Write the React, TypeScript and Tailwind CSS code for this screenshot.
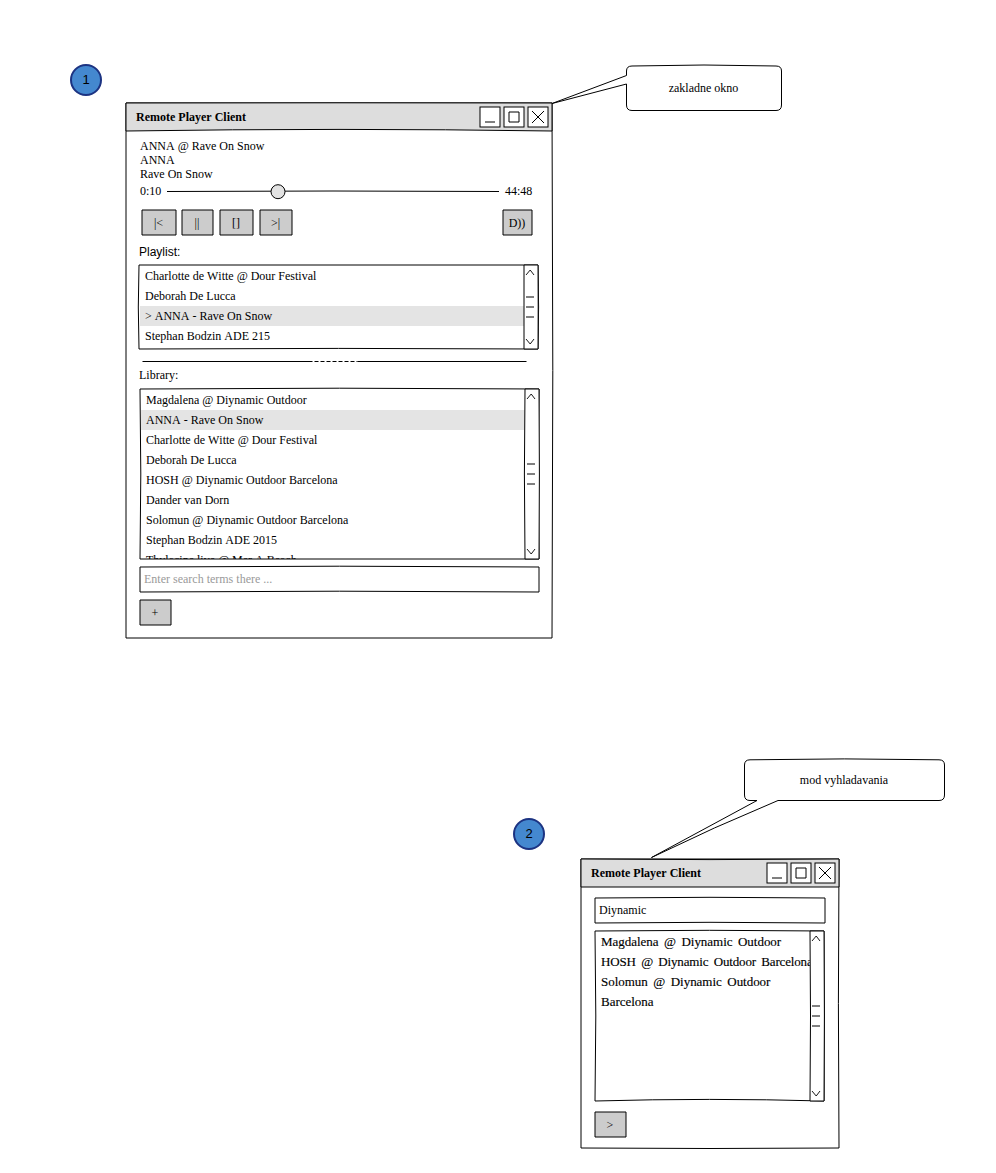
import type { ReactNode } from "react";

type Bow = { t?: number; r?: number; b?: number; l?: number };

/** Hand-drawn outline: four gently bowed strokes around a box. */
function Outline({ w, h, bow = {}, fill = "none" }: { w: number; h: number; bow?: Bow; fill?: string }) {
  const { t = 0, r = 0, b = 0, l = 0 } = bow;
  const d = `M0 0Q${w / 2} ${t * 2} ${w} 0Q${w + r * 2} ${h / 2} ${w} ${h}Q${w / 2} ${h + b * 2} 0 ${h}Q${l * 2} ${h / 2} 0 0Z`;
  return (
    <svg width={w} height={h} className="pointer-events-none absolute left-0 top-0 overflow-visible" aria-hidden="true">
      <path d={d} fill={fill} stroke="#000" strokeWidth="1" strokeLinejoin="round" />
    </svg>
  );
}

function SketchButton({ w, children }: { w: number; children: ReactNode }) {
  return (
    <button className="relative h-[25px] shrink-0 leading-[27px]" style={{ width: w }}>
      <Outline w={w} h={25} fill="#ccc" />
      <span className="relative block h-[25px] pr-px">{children}</span>
    </button>
  );
}

function WindowButton({ children }: { children: ReactNode }) {
  return (
    <button className="size-5">
      <svg width="20" height="20" className="block overflow-visible" fill="none" stroke="#000">
        <rect width="20" height="20" fill="#fff" />
        {children}
      </svg>
    </button>
  );
}

function TitleBar({ w, bow }: { w: number; bow?: Bow }) {
  return (
    <header className="relative flex h-7 items-center justify-between pl-2.5 pr-1">
      <Outline w={w} h={28} bow={bow} fill="#ddd" />
      <h1 className="relative font-bold">Remote Player Client</h1>
      <div className="relative flex gap-1">
        <WindowButton>
          <path d="M5 15h10" />
        </WindowButton>
        <WindowButton>
          <path d="M5 5h10v10h-10z" />
        </WindowButton>
        <WindowButton>
          <path d="M4 4l12 12M16 4l-12 12" />
        </WindowButton>
      </div>
    </header>
  );
}

function Scrollbar({ h, bow }: { h: number; bow?: Bow }) {
  const m = h / 2;
  return (
    <div className="relative w-3.5 shrink-0">
      <Outline w={14} h={h} bow={bow} fill="#fff" />
      <svg width="14" height={h} className="relative block overflow-visible" fill="none" stroke="#000">
        <path d={`M2 10L6.2 5L10 10M2 ${h - 10}L6.2 ${h - 5}L10 ${h - 10}`} strokeWidth="0.9" />
        <path d={`M2 ${m - 10}h8M2 ${m}h8M2 ${m + 10}h8`} />
      </svg>
    </div>
  );
}

function ListBox({
  w,
  h,
  items,
  selected,
  bow,
  barBow,
  text = "",
}: {
  w: number;
  h: number;
  items: string[];
  selected?: number;
  bow?: Bow;
  barBow?: Bow;
  text?: string;
}) {
  return (
    <div className="relative flex" style={{ width: w, height: h }}>
      <Outline w={w} h={h} bow={bow} />
      <ul className={`min-w-0 flex-1 overflow-hidden pl-px pt-px ${text}`}>
        {items.map((item, i) => (
          <li key={i} className={`h-5 whitespace-nowrap pl-[5px] leading-5 ${i === selected ? "bg-[#e4e4e4]" : ""}`}>
            {item}
          </li>
        ))}
      </ul>
      <Scrollbar h={h} bow={barBow} />
    </div>
  );
}

function Badge({ children, className }: { children: ReactNode; className: string }) {
  return (
    <div
      className={`absolute flex size-8 items-center justify-center rounded-full border-2 border-[#1c3382] bg-[#4488cf] font-['Liberation_Sans',sans-serif] text-[13px] ${className}`}
    >
      {children}
    </div>
  );
}

const playlist = ["Charlotte de Witte @ Dour Festival", "Deborah De Lucca", "> ANNA - Rave On Snow", "Stephan Bodzin ADE 215"];

const library = [
  "Magdalena @ Diynamic Outdoor",
  "ANNA - Rave On Snow",
  "Charlotte de Witte @ Dour Festival",
  "Deborah De Lucca",
  "HOSH @ Diynamic Outdoor Barcelona",
  "Dander van Dorn",
  "Solomun @ Diynamic Outdoor Barcelona",
  "Stephan Bodzin ADE 2015",
  "Thylacine live @ Mer A Beach",
];

const results = ["Magdalena @ Diynamic Outdoor", "HOSH @ Diynamic Outdoor Barcelona", "Solomun @ Diynamic Outdoor", "Barcelona"];

function PlayerWindow() {
  return (
    <section className="absolute left-[126px] top-[103px] h-[535px] w-[426px]">
      <Outline w={426} h={535} bow={{ r: 0.8 }} />
      <TitleBar w={426} bow={{ b: -1.6, t: -0.2 }} />
      <div className="relative pl-3.5 pt-2 leading-[14px]">
        <p>ANNA @ Rave On Snow</p>
        <p>ANNA</p>
        <p>Rave On Snow</p>
        <div className="mt-0.5 flex h-[15px] w-[393px] items-center">
          <span className="w-[27px]">0:10</span>
          <svg width="332" height="16" className="block overflow-visible" stroke="#000">
            <path d="M0 8.5Q166 7.5 332 8.5" fill="none" />
            <circle cx="111" cy="8.7" r="7" fill="#e2e2e2" />
          </svg>
          <span className="pl-1.5">44:48</span>
        </div>
        <div className="ml-0.5 mt-3 flex w-[390px]">
          <SketchButton w={34}>|&lt;</SketchButton>
          <div className="w-1.5" />
          <SketchButton w={31}>||</SketchButton>
          <div className="w-[7px]" />
          <SketchButton w={33}>[]</SketchButton>
          <div className="w-[7px]" />
          <SketchButton w={32}>&gt;|</SketchButton>
          <div className="flex-1" />
          <SketchButton w={29}>D))</SketchButton>
        </div>
      </div>
      <div className="relative pl-[13px] leading-[14px]">
        <h2 className="mt-2.5 font-['Liberation_Sans',sans-serif]">Playlist:</h2>
        <div className="mt-1.5">
          <ListBox w={399} h={84} items={playlist} selected={2} bow={{ l: -0.7, b: -0.6, r: 0.6 }} barBow={{ r: 0.2 }} />
        </div>
        <svg width="399" height="19" className="block" fill="none" stroke="#000">
          <path d="M3.5 12.5h170M218.5 12.5h169" />
          <path d="M173.5 12.5h45" strokeDasharray="4 2" strokeDashoffset="-2" />
        </svg>
        <h2>Library:</h2>
      </div>
      <div className="relative mt-[7px] pl-3.5">
        <ListBox w={399} h={170} items={library} selected={1} bow={{ l: 0.8, t: -0.8, r: -0.7 }} barBow={{ l: -0.6, r: 0.4 }} />
        <div className="relative mt-2 h-[25px] w-[399px] pl-1 leading-[25px] text-[#9a9a9a]">
          <Outline w={399} h={25} bow={{ t: -0.8, b: -0.8 }} />
          Enter search terms there ...
        </div>
        <div className="mt-2 flex">
          <SketchButton w={31}>+</SketchButton>
        </div>
      </div>
    </section>
  );
}

function SearchWindow() {
  return (
    <section className="absolute left-[581px] top-[859px] h-[289px] w-[258px]">
      <Outline w={258} h={289} bow={{ r: -0.6, b: 0.5 }} />
      <TitleBar w={258} bow={{ t: 0.6 }} />
      <div className="relative pl-3.5 pt-[11px]">
        <div className="relative h-[25px] w-[230px] pl-1 leading-[25px]">
          <Outline w={230} h={25} bow={{ t: -0.7, b: -0.7 }} />
          Diynamic
        </div>
        <div className="mt-2">
          <ListBox
            w={229}
            h={170}
            items={results}
            bow={{ t: -0.7, b: -1.6, l: 0.8, r: 0.4 }}
            barBow={{ l: 0.5, r: 0.4 }}
            text="text-[13px] tracking-[-0.03px] [word-spacing:2.3px] [-webkit-text-stroke:0.15px_#000] [&>li:nth-child(2)]:tracking-[-0.16px]"
          />
        </div>
        <div className="mt-[11px] flex">
          <SketchButton w={31}>&gt;</SketchButton>
        </div>
      </div>
    </section>
  );
}

export default function App() {
  return (
    <main className="relative h-[1173px] w-[996px] overflow-hidden bg-white font-['Liberation_Serif',serif] text-[12px] text-black [font-kerning:none]">
      <Badge className="left-[70px] top-16">1</Badge>
      <PlayerWindow />
      <div className="absolute left-[626px] top-[65px] flex h-[46px] w-[155px] items-center justify-center">
        <svg width="156" height="46" className="absolute left-0 top-0 overflow-visible" fill="#fff" stroke="#000">
          <path d="M6 1Q78 -1 150 1Q155.5 1 155.5 6V40Q155.5 45.5 150 45.5H6Q.5 45.5 .5 40V19L-74 38.5L.5 10.5V6Q.5 1 6 1Z" />
        </svg>
        <span className="relative">zakladne okno</span>
      </div>
      <Badge className="left-[513px] top-[818px]">2</Badge>
      <SearchWindow />
      <div className="absolute left-[744px] top-[759px] flex h-[42px] w-[200px] items-center justify-center">
        <svg width="200" height="42" className="absolute left-0 top-0 overflow-visible" fill="#fff" stroke="#000">
          <path d="M6 .8Q100 -1 195 .8Q200.5 .8 200.5 6V36Q200.5 41.5 195 41.5H34Q-30 68 -92.5 98.5L13 41.5H6Q.5 41.5 .5 36V6Q.5 .8 6 .8Z" />
        </svg>
        <span className="relative">mod vyhladavania</span>
      </div>
    </main>
  );
}
